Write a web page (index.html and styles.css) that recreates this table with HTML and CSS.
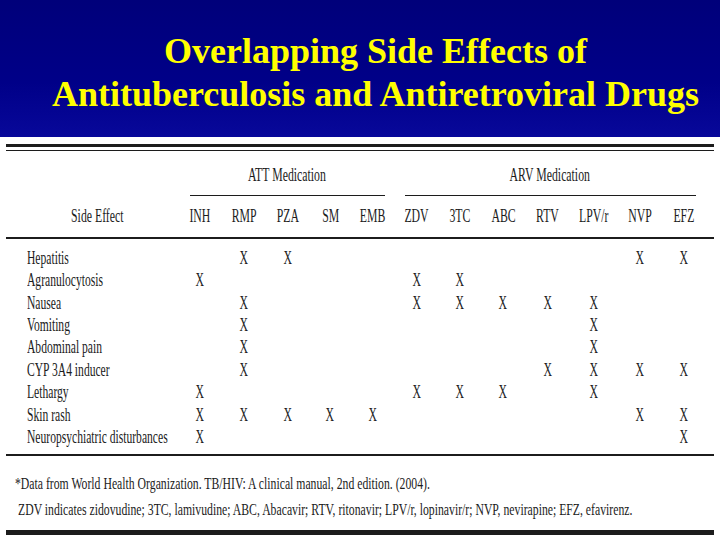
FILE: index.html
```html
<!DOCTYPE html>
<html>
<head>
<meta charset="utf-8">
<link rel="stylesheet" href="styles.css">
</head>
<body>
<div class="slide">
  <header class="banner">
    <h1 class="title"><span class="tl">Overlapping Side Effects of</span><span class="tl">Antituberculosis and Antiretroviral Drugs</span></h1>
  </header>
  <section class="content">
    <div class="rule-thick"></div>
    <div class="rule-thin"></div>
    <div class="grid head">
      <div class="gap-lead"></div>
      <div class="group att"><span class="sx">ATT Medication</span></div>
      <div class="group arv"><span class="sx">ARV Medication</span></div>

      <div class="pad"></div>
      <div class="ch"><span class="sx">Side Effect</span></div>
      <div class="pad"></div>
      <div class="ch"><span class="sx">INH</span></div>
      <div class="ch"><span class="sx">RMP</span></div>
      <div class="ch"><span class="sx">PZA</span></div>
      <div class="ch"><span class="sx">SM</span></div>
      <div class="ch"><span class="sx">EMB</span></div>
      <div class="ch"><span class="sx">ZDV</span></div>
      <div class="ch"><span class="sx">3TC</span></div>
      <div class="ch"><span class="sx">ABC</span></div>
      <div class="ch"><span class="sx">RTV</span></div>
      <div class="ch"><span class="sx">LPV/r</span></div>
      <div class="ch"><span class="sx">NVP</span></div>
      <div class="ch"><span class="sx">EFZ</span></div>
    </div>
    <div class="mid-rule"></div>
    <div class="grid body" id="rows"></div>
    <div class="rule-foot"></div>
    <div class="notes">
      <p class="note"><span class="sxl">*Data from World Health Organization. TB/HIV: A clinical manual, 2nd edition. (2004).</span></p>
      <p class="note n2"><span class="sxl">ZDV indicates zidovudine; 3TC, lamivudine; ABC, Abacavir; RTV, ritonavir; LPV/r, lopinavir/r; NVP, nevirapine; EFZ, efavirenz.</span></p>
    </div>
    <div class="rule-bottom"></div>
  </section>
</div>
<script src="app.js"></script>
</body>
</html>
```
FILE: app.js
```js
var data = [
  ["Hepatitis",                    [0,1,1,0,0, 0,0,0,0,0,1,1]],
  ["Agranulocytosis",              [1,0,0,0,0, 1,1,0,0,0,0,0]],
  ["Nausea",                       [0,1,0,0,0, 1,1,1,1,1,0,0]],
  ["Vomiting",                     [0,1,0,0,0, 0,0,0,0,1,0,0]],
  ["Abdominal pain",               [0,1,0,0,0, 0,0,0,0,1,0,0]],
  ["CYP 3A4 inducer",              [0,1,0,0,0, 0,0,0,1,1,1,1]],
  ["Lethargy",                     [1,0,0,0,0, 1,1,1,0,1,0,0]],
  ["Skin rash",                    [1,1,1,1,1, 0,0,0,0,0,1,1]],
  ["Neuropsychiatric disturbances",[1,0,0,0,0, 0,0,0,0,0,0,1]]
];
var host = document.getElementById("rows");
data.forEach(function (r) {
  var l = document.createElement("div");
  l.className = "rl";
  l.innerHTML = '<span class="sxl">' + r[0] + '</span>';
  host.appendChild(l);
  r[1].forEach(function (v) {
    var c = document.createElement("div");
    c.className = "cell";
    if (v) c.innerHTML = '<span class="sx">X</span>';
    host.appendChild(c);
  });
});
```
FILE: styles.css
```css
html, body {
  margin: 0;
  padding: 0;
  background: #ffffff;
}
.slide {
  width: 720px;
  height: 540px;
  overflow: hidden;
  background: #ffffff;
  font-family: "Liberation Serif", "Times New Roman", serif;
  color: #1c1c1c;
}
.banner {
  height: 137px;
  background: linear-gradient(180deg, #00007a 0%, #000088 60%, #08089a 100%);
  display: flex;
  justify-content: center;
  padding-left: 31px;
  box-sizing: border-box;
}
.title {
  margin: 0;
  padding-top: 30px;
  display: flex;
  flex-direction: column;
  align-items: center;
  font-family: "Liberation Serif", "Times New Roman", serif;
  font-weight: bold;
  font-size: 36px;
  line-height: 43px;
  color: #ffff00;
}
.tl {
  display: block;
  white-space: nowrap;
}
.content {
  padding: 7px 6px 0 6px;
}
.rule-thick {
  height: 3px;
  background: #1c1c1c;
}
.rule-thin {
  height: 1px;
  margin-top: 3px;
  background: #1c1c1c;
}
.grid {
  display: grid;
  grid-template-columns: 21px 140px 11px 44px 44.5px 43px 41.5px 43.5px 44px 43px 43.5px 45px 47px 45.5px 43.5px;
}
.gap-lead {
  grid-column: 1 / span 3;
}
.group {
  height: 45px;
  display: flex;
  justify-content: center;
  align-items: center;
  font-size: 19px;
  border-bottom: 1px solid #1c1c1c;
  box-sizing: border-box;
  padding-top: 3px;
}
.att {
  grid-column: span 5;
  margin: 0 10px 0 12px;
}
.arv {
  grid-column: span 7;
  margin: 0 10px 0 10px;
}
.ch {
  height: 41px;
  display: flex;
  justify-content: center;
  align-items: center;
  font-size: 19px;
  padding-bottom: 2px;
  box-sizing: border-box;
}
.mid-rule {
  height: 1.5px;
  background: #1c1c1c;
}
.body {
  padding-top: 8px;
  grid-auto-rows: 22.45px;
  font-size: 19px;
}
.rl {
  grid-column: 2 / span 2;
  display: flex;
  align-items: center;
  white-space: nowrap;
}
.cell {
  display: flex;
  justify-content: center;
  align-items: center;
}
.sx {
  display: inline-block;
  transform: scaleX(0.62);
  transform-origin: center;
  white-space: nowrap;
}
.sxl {
  display: inline-block;
  transform: scaleX(0.61);
  transform-origin: left center;
  white-space: nowrap;
}
.rule-foot {
  margin-top: 6px;
  height: 1.5px;
  background: #1c1c1c;
}
.notes {
  padding: 15px 0 0 9px;
}
.note {
  margin: 0;
  font-size: 17px;
  line-height: 26px;
  height: 26px;
}
.n2 {
  padding-left: 3px;
}
.note .sxl {
  transform: scaleX(0.69);
}
.rule-bottom {
  margin-top: 7px;
  height: 5px;
  background: #1c1c1c;
}
```
